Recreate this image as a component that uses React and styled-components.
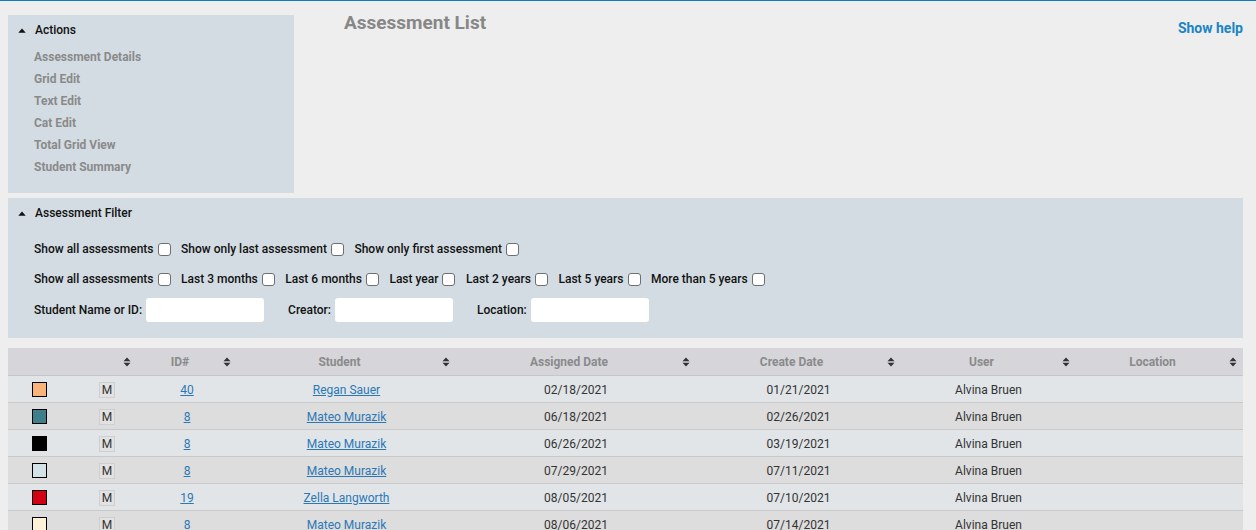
import React from "react";
import styled, { createGlobalStyle } from "styled-components";

const GlobalStyle = createGlobalStyle`
  html, body { margin: 0; padding: 0; background: #eeeeee; }
  body { font-family: Roboto, "Liberation Sans", Arial, sans-serif; font-size: 12px; color: #222; }
`;

const Page = styled.div`
  border-top: 1px solid #0a7fc4;
  padding: 14px 13px 0 8px;
  display: flex;
  flex-direction: column;
  gap: 5px;
  min-height: 529px;
  box-sizing: border-box;
`;

const TopRow = styled.div`
  display: flex;
  align-items: flex-start;
`;

const Panel = styled.section`
  background: #d3dce2;
  width: ${(p) => (p.$width ? `${p.$width}px` : "auto")};
  box-sizing: border-box;
  padding-bottom: ${(p) => p.$pb || 15}px;
`;

const PanelHeader = styled.div`
  height: 30px;
  display: flex;
  align-items: center;
  gap: 9px;
  padding-left: 10px;
  font-weight: 500;
  font-size: 12px;
  color: #111;
`;

const ActionList = styled.ul`
  list-style: none;
  margin: 0;
  padding: 1px 0 0 26px;
`;

const ActionItem = styled.li`
  height: 22px;
  line-height: 22px;
  font-weight: 700;
  font-size: 12px;
  color: #8a8a8a;
`;

const TitleArea = styled.div`
  flex: 1;
  display: flex;
  justify-content: space-between;
  padding-left: 50px;
`;

const Title = styled.h1`
  margin: 0;
  margin-top: -3px;
  font-size: 19px;
  font-weight: 700;
  color: #878787;
  line-height: 22px;
`;

const HelpLink = styled.a`
  margin-top: 5px;
  font-size: 14px;
  font-weight: 700;
  color: #1a84c4;
  text-decoration: none;
  line-height: 16px;
`;

const FilterBody = styled.div`
  padding: 10px 0 0 26px;
  display: flex;
  flex-direction: column;
  gap: 8px;
`;

const FilterRow = styled.div`
  display: flex;
  align-items: center;
  height: ${(p) => p.$h || 22}px;
`;

const CheckGroup = styled.label`
  display: flex;
  align-items: center;
  gap: 4px;
  margin-right: 10.5px;
  font-weight: 500;
  font-size: 12px;
  color: #111;
`;

const Check = styled.input.attrs({ type: "checkbox" })`
  appearance: none;
  margin: 0;
  width: 13px;
  height: 13px;
  border: 1px solid #6f6f6f;
  border-radius: 3px;
  background: #fff;
  box-sizing: border-box;
`;

const FieldGroup = styled.label`
  display: flex;
  align-items: center;
  gap: 4px;
  margin-right: 24px;
  font-weight: 500;
  font-size: 12px;
  color: #111;
`;

const TextInput = styled.input.attrs({ type: "text" })`
  width: 118px;
  height: 24px;
  box-sizing: border-box;
  border: none;
  border-radius: 3px;
  background: #fff;
  margin: 0;
`;

const Table = styled.div`
  margin-top: 5px;
  display: flex;
  flex-direction: column;
`;

const COLS = "69px 60px 100px 219px 240px 205px 175px 167px";

const HeadRow = styled.div`
  display: grid;
  grid-template-columns: ${COLS};
  height: 28px;
  background: #d5d5da;
  border-bottom: 1px solid #c6c6cb;
  box-sizing: border-box;
`;

const HeadCell = styled.div`
  display: flex;
  align-items: center;
  padding: 0 6px 0 10px;
  font-weight: 700;
  font-size: 12px;
  color: #8a8a8a;
`;

const HeadText = styled.span`
  flex: 1;
  text-align: center;
`;

const SortIcon = styled.svg`
  margin-left: 10px;
  flex: none;
`;

const BodyRow = styled.div`
  display: grid;
  grid-template-columns: ${COLS};
  height: 27px;
  box-sizing: border-box;
  padding-top: 1px;
  background: ${(p) => (p.$odd ? "#e1e5e8" : "#dddddd")};
  border-bottom: 1px solid #c9c9c9;
`;

const Cell = styled.div`
  display: flex;
  align-items: center;
  justify-content: ${(p) => (p.$left ? "flex-start" : "center")};
  padding-left: ${(p) => (p.$left ? "24px" : "0")};
  font-size: 12px;
  color: #333;
`;

const Swatch = styled.span`
  width: 13px;
  height: 13px;
  border: 1px solid #000;
  background: ${(p) => p.$color};
`;

const MBox = styled.span`
  width: 16px;
  height: 16px;
  box-sizing: border-box;
  border: 1px solid #cfcfcf;
  background: #e2e2e2;
  display: flex;
  align-items: center;
  justify-content: center;
  font-size: 12px;
  color: #333;
`;

const Link = styled.a`
  color: #2b78b6;
  text-decoration: underline;
`;

const Caret = () => (
  <svg width="8" height="5" viewBox="0 0 8 5">
    <path d="M0.3 4.8 L4 0.4 L7.7 4.8 Z" fill="#111" strokeLinejoin="round" />
  </svg>
);

const Sort = () => (
  <SortIcon width="8" height="10" viewBox="0 0 8 10">
    <path d="M0.5 4.2 L4 0.5 L7.5 4.2 Z M0.5 5.8 L4 9.5 L7.5 5.8 Z" fill="#333" />
  </SortIcon>
);

const actions = [
  "Assessment Details",
  "Grid Edit",
  "Text Edit",
  "Cat Edit",
  "Total Grid View",
  "Student Summary",
];

const row1 = ["Show all assessments", "Show only last assessment", "Show only first assessment"];
const row2 = [
  "Show all assessments",
  "Last 3 months",
  "Last 6 months",
  "Last year",
  "Last 2 years",
  "Last 5 years",
  "More than 5 years",
];

const headers = ["ID#", "Student", "Assigned Date", "Create Date", "User", "Location"];

const rows = [
  { color: "#f9b479", id: "40", student: "Regan Sauer", assigned: "02/18/2021", created: "01/21/2021" },
  { color: "#3f7e8b", id: "8", student: "Mateo Murazik", assigned: "06/18/2021", created: "02/26/2021" },
  { color: "#000000", id: "8", student: "Mateo Murazik", assigned: "06/26/2021", created: "03/19/2021" },
  { color: "#d3e2e6", id: "8", student: "Mateo Murazik", assigned: "07/29/2021", created: "07/11/2021" },
  { color: "#d30014", id: "19", student: "Zella Langworth", assigned: "08/05/2021", created: "07/10/2021" },
  { color: "#fff2d6", id: "8", student: "Mateo Murazik", assigned: "08/06/2021", created: "07/14/2021" },
];

export default function App() {
  return (
    <>
      <GlobalStyle />
      <Page>
        <TopRow>
          <Panel $width={286}>
            <PanelHeader>
              <Caret />
              Actions
            </PanelHeader>
            <ActionList>
              {actions.map((a) => (
                <ActionItem key={a}>{a}</ActionItem>
              ))}
            </ActionList>
          </Panel>
          <TitleArea>
            <Title>Assessment List</Title>
            <HelpLink href="#">Show help</HelpLink>
          </TitleArea>
        </TopRow>

        <Panel $pb={16}>
          <PanelHeader>
            <Caret />
            Assessment Filter
          </PanelHeader>
          <FilterBody>
            <FilterRow>
              {row1.map((l) => (
                <CheckGroup key={l}>
                  {l}
                  <Check />
                </CheckGroup>
              ))}
            </FilterRow>
            <FilterRow>
              {row2.map((l, i) => (
                <CheckGroup key={l + i}>
                  {l}
                  <Check />
                </CheckGroup>
              ))}
            </FilterRow>
            <FilterRow $h={24}>
              <FieldGroup>
                Student Name or ID:
                <TextInput />
              </FieldGroup>
              <FieldGroup>
                Creator:
                <TextInput />
              </FieldGroup>
              <FieldGroup>
                Location:
                <TextInput />
              </FieldGroup>
            </FilterRow>
          </FilterBody>
        </Panel>

        <Table>
          <HeadRow>
            <HeadCell />
            <HeadCell>
              <HeadText />
              <Sort />
            </HeadCell>
            {headers.map((h) => (
              <HeadCell key={h}>
                <HeadText>{h}</HeadText>
                <Sort />
              </HeadCell>
            ))}
          </HeadRow>
          {rows.map((r, i) => (
            <BodyRow key={i} $odd={i % 2 === 0}>
              <Cell $left>
                <Swatch $color={r.color} />
              </Cell>
              <Cell>
                <MBox>M</MBox>
              </Cell>
              <Cell>
                <Link href="#">{r.id}</Link>
              </Cell>
              <Cell>
                <Link href="#">{r.student}</Link>
              </Cell>
              <Cell>{r.assigned}</Cell>
              <Cell>{r.created}</Cell>
              <Cell>Alvina Bruen</Cell>
              <Cell />
            </BodyRow>
          ))}
        </Table>
      </Page>
    </>
  );
}
